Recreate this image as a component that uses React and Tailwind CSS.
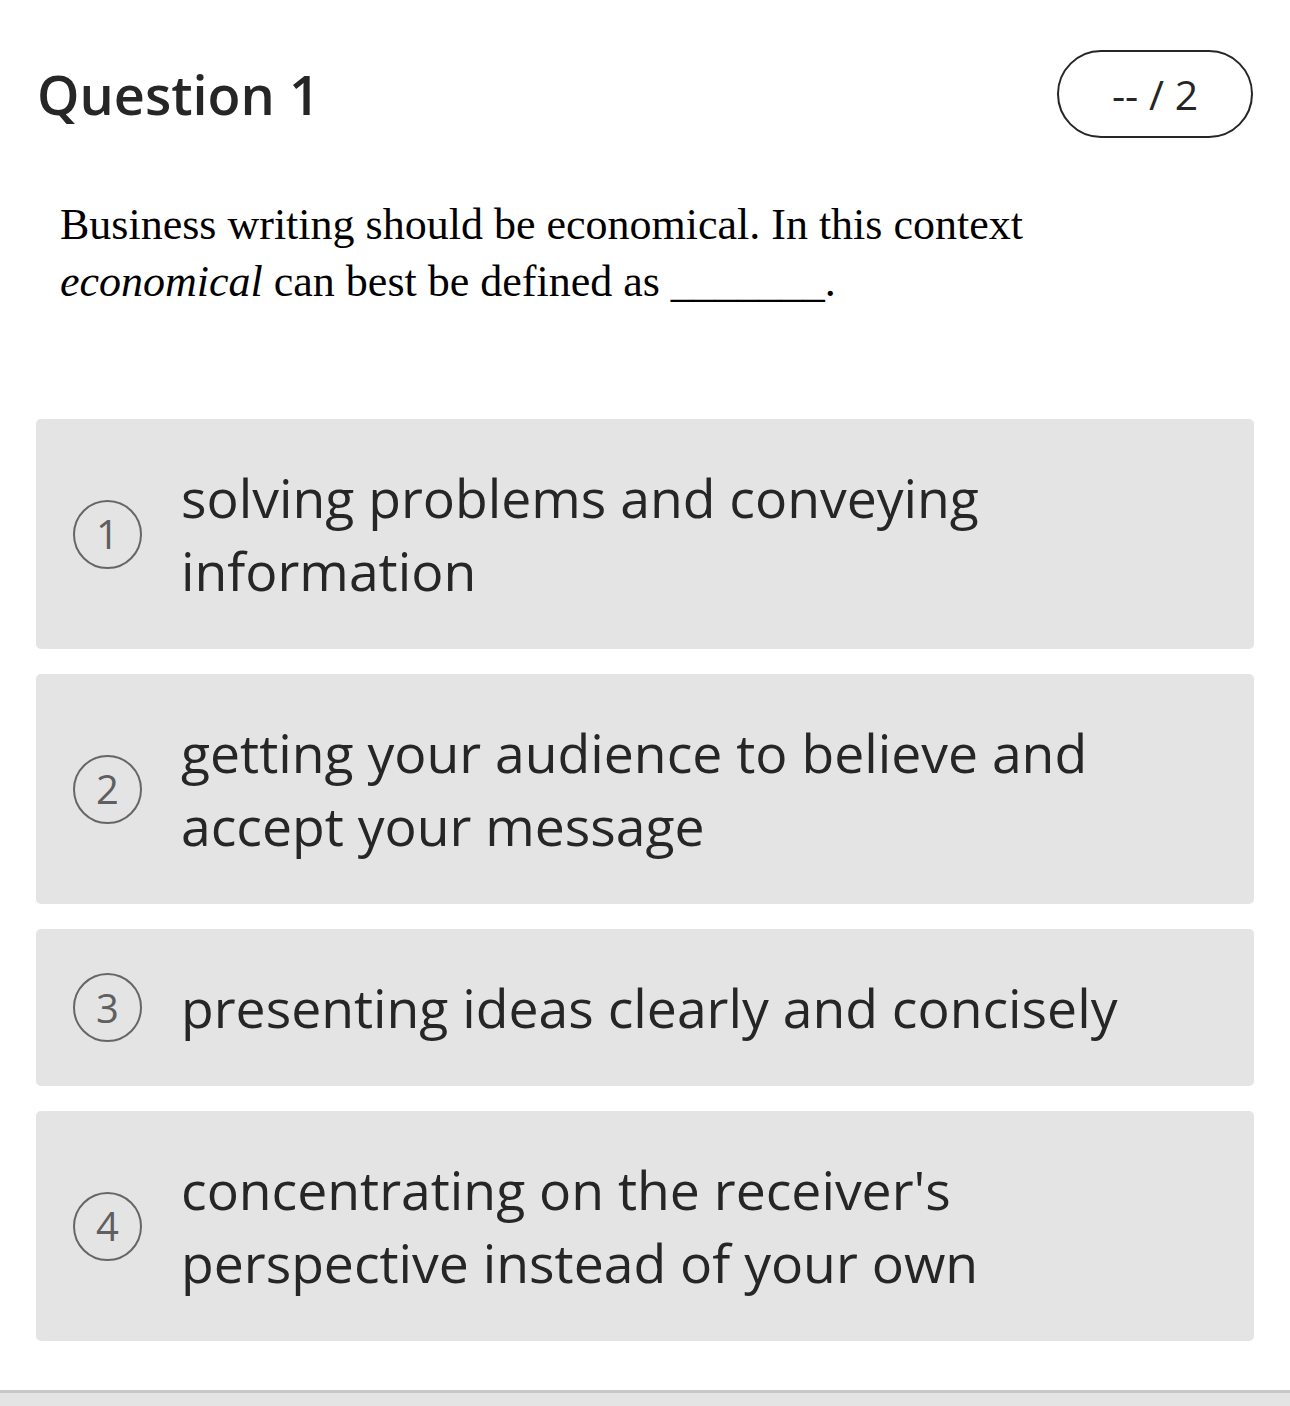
import React from 'react';

const options = [
  { n: 1, text: 'solving problems and conveying information' },
  { n: 2, text: 'getting your audience to believe and accept your message' },
  { n: 3, text: 'presenting ideas clearly and concisely' },
  { n: 4, text: "concentrating on the receiver's perspective instead of your own" },
];

export default function App() {
  return (
    <div className="min-h-[1406px] bg-white flex flex-col text-[#262626]" style={{ fontFamily: '"Open Sans", sans-serif' }}>
      <div className="flex-1">
        {/* header */}
        <div className="flex items-center justify-between pl-[37px] pr-[37px] pt-[50px]">
          <div className="text-[54px] font-semibold leading-none">Question 1</div>
          <div className="w-[196px] h-[88px] rounded-full border-2 border-[#262626] flex items-center justify-center text-[41px] leading-none">
            -- / 2
          </div>
        </div>

        {/* question */}
        <div className="pl-[60px] pr-[200px] mt-[58px] text-[44px] leading-[57px] text-black" style={{ fontFamily: '"Liberation Serif", serif' }}>
          Business writing should be economical. In this context <i>economical</i> can best be defined as _______.
        </div>

        {/* options */}
        <div className="px-[36px] mt-[109px] flex flex-col gap-[25px]">
          {options.map((o) => (
            <div key={o.n} className="bg-[#e4e4e4] rounded-[5px] flex items-center pl-[37px] pr-[100px] py-[42px]">
              <div className="w-[69px] h-[69px] shrink-0 rounded-full border-[2.5px] border-[#666666] flex items-center justify-center text-[40px] font-medium text-[#5f5f5f] leading-none">
                {o.n}
              </div>
              <div className="ml-[39px] text-[53.5px] leading-[73px]">{o.text}</div>
            </div>
          ))}
        </div>
      </div>
      <div className="h-[16px] bg-[#e4e4e4] border-t-[3px] border-[#c8c8c8]"></div>
    </div>
  );
}
